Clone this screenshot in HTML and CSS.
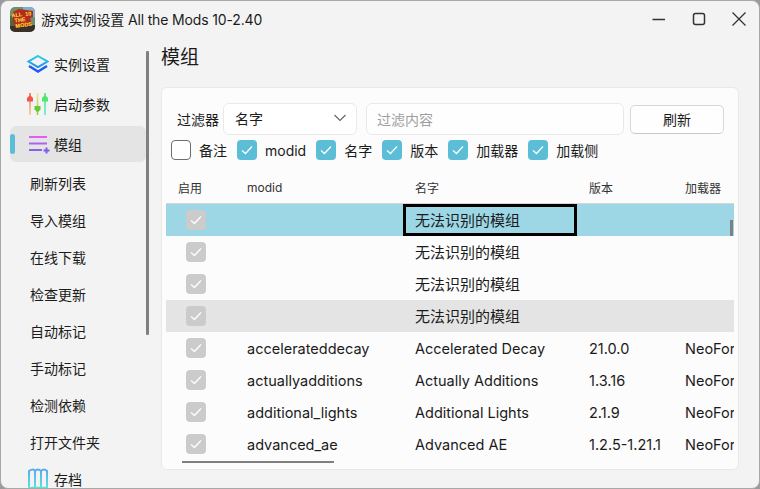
FILE: index.html
```html
<!DOCTYPE html>
<html lang="zh">
<head>
<meta charset="utf-8">
<title>游戏实例设置</title>
<link rel="stylesheet" href="styles.css">
</head>
<body>
<div class="window">
  <header class="titlebar">
    <svg class="app-icon" width="25" height="25" viewBox="0 0 25 25">
      <defs><clipPath id="rc"><rect width="25" height="25" rx="5"/></clipPath></defs>
      <g clip-path="url(#rc)">
        <rect width="25" height="25" fill="#6f8f6a"/>
        <rect x="13" width="12" height="10" fill="#7fb0c8"/>
        <rect y="18" width="25" height="7" fill="#3a3028"/>
        <rect x="0" y="9" width="5" height="10" fill="#4b6b3c"/>
        <path d="M3 5l6-3 14 2 0 6-3 1 2 7-16 3-3-6z" fill="#b5291e"/>
        <g transform="rotate(-8 12.500 12.500)">
          <text x="7.500" y="9" class="logo-text">ALL</text>
          <text x="19" y="9.500" class="logo-text">10</text>
          <text x="10" y="14.500" class="logo-text">THE</text>
          <text x="13" y="20" class="logo-text">MODS</text>
        </g>
      </g>
    </svg>
    <span class="title">游戏实例设置 All the Mods 10-2.40</span>
    <div class="controls">
      <svg width="14" height="14" viewBox="0 0 14 14"><path d="M0.500 7.500h12.500" class="ctl"/></svg>
      <svg width="14" height="14" viewBox="0 0 14 14"><rect x="1.500" y="1.500" width="11" height="11" rx="2" class="ctl"/></svg>
      <svg width="14" height="14" viewBox="0 0 14 14"><path d="M0.500 0.500l13 13M13.500 0.500l-13 13" class="ctl thin"/></svg>
    </div>
  </header>
  <div class="body">
    <nav class="sidebar">
      <div class="nav-list">
        <div class="nav-item big">
          <svg class="nav-icon" width="24" height="20" viewBox="0 0 24 20">
            <defs><linearGradient id="g1" x1="0" y1="0" x2="0" y2="1"><stop offset="0" stop-color="#1fd5e0"/><stop offset="1" stop-color="#1f8cf0"/></linearGradient></defs>
            <path d="M12 2l9.500 5.500-9.500 5.500-9.500-5.500z" fill="none" stroke="url(#g1)" stroke-width="2"/>
            <path d="M3 12l9 5.500 9-5.500" fill="none" stroke="#1a5cf5" stroke-width="2.400"/>
          </svg>
          <span>实例设置</span>
        </div>
        <div class="nav-item big">
          <svg class="nav-icon" width="24" height="24" viewBox="0 0 24 24">
            <defs>
              <linearGradient id="s1" x1="0" y1="0" x2="0" y2="1"><stop offset="0" stop-color="#f56a50"/><stop offset="1" stop-color="#f7c79a"/></linearGradient>
              <linearGradient id="s2" x1="0" y1="0" x2="0" y2="1"><stop offset="0" stop-color="#f2e38a"/><stop offset="1" stop-color="#8fd04a"/></linearGradient>
              <linearGradient id="s3" x1="0" y1="0" x2="0" y2="1"><stop offset="0" stop-color="#52e86a"/><stop offset="1" stop-color="#5ceadc"/></linearGradient>
            </defs>
            <rect x="3.200" y="1" width="1.600" height="22" fill="url(#s1)"/>
            <rect x="10.700" y="1" width="1.600" height="22" fill="url(#s2)"/>
            <rect x="18.200" y="1" width="1.600" height="22" fill="url(#s3)"/>
            <path d="M4 3l3 3v3.500h-6v-3.500z" fill="#f5544a"/>
            <path d="M8.500 14h6v3.500l-3 3-3-3z" fill="#68c832"/>
            <path d="M19 3l3 3v3.500h-6v-3.500z" fill="#4fe86a"/>
          </svg>
          <span>启动参数</span>
        </div>
        <div class="nav-item big active">
          <i class="marker"></i>
          <svg class="nav-icon" width="24" height="20" viewBox="0 0 24 20">
            <path d="M3 3h18" stroke="#e45cf5" stroke-width="2"/>
            <path d="M3 9.500h18" stroke="#b060f0" stroke-width="2"/>
            <path d="M3 16h13" stroke="#8a60ee" stroke-width="2"/>
            <path d="M17.500 16.500h6M20.500 13.500v6" stroke="#7a5cf0" stroke-width="2"/>
          </svg>
          <span>模组</span>
        </div>
        <div class="nav-item sub">刷新列表</div>
        <div class="nav-item sub">导入模组</div>
        <div class="nav-item sub">在线下载</div>
        <div class="nav-item sub">检查更新</div>
        <div class="nav-item sub">自动标记</div>
        <div class="nav-item sub">手动标记</div>
        <div class="nav-item sub">检测依赖</div>
        <div class="nav-item sub">打开文件夹</div>
        <div class="nav-item big last">
          <svg class="nav-icon" width="24" height="22" viewBox="0 0 24 22">
            <defs><linearGradient id="g2" x1="0" y1="0" x2="0" y2="1"><stop offset="0" stop-color="#5aa8f0"/><stop offset="1" stop-color="#5ae8d8"/></linearGradient></defs>
            <path d="M3 3c3-2 5-2 6 0v18c-1-2-3-2-6 0zM9 3c2-2 4-2 6 0v18c-2-2-4-2-6 0zM15 3c2-2 4-2 6 0v18c-2-2-4-2-6 0z" fill="none" stroke="url(#g2)" stroke-width="2"/>
          </svg>
          <span>存档</span>
        </div>
      </div>
      <i class="side-scroll"></i>
    </nav>
    <main class="content">
      <h1 class="heading">模组</h1>
      <section class="card">
        <div class="filter-row">
          <label class="filter-label">过滤器</label>
          <div class="select">
            <span>名字</span>
            <svg width="14" height="8" viewBox="0 0 14 8"><path d="M1.500 1l5.500 5.500 5.500-5.500" fill="none" stroke="#666" stroke-width="1.200"/></svg>
          </div>
          <div class="input">过滤内容</div>
          <button class="refresh">刷新</button>
        </div>
        <div class="checks">
          <span class="check"><i class="box off"></i>备注</span>
          <span class="check"><i class="box on"><svg width="20" height="20" viewBox="0 0 20 20"><path d="M5 10.500l3.500 3 6.500-7" class="tick"/></svg></i>modid</span>
          <span class="check"><i class="box on"><svg width="20" height="20" viewBox="0 0 20 20"><path d="M5 10.500l3.500 3 6.500-7" class="tick"/></svg></i>名字</span>
          <span class="check"><i class="box on"><svg width="20" height="20" viewBox="0 0 20 20"><path d="M5 10.500l3.500 3 6.500-7" class="tick"/></svg></i>版本</span>
          <span class="check"><i class="box on"><svg width="20" height="20" viewBox="0 0 20 20"><path d="M5 10.500l3.500 3 6.500-7" class="tick"/></svg></i>加载器</span>
          <span class="check"><i class="box on"><svg width="20" height="20" viewBox="0 0 20 20"><path d="M5 10.500l3.500 3 6.500-7" class="tick"/></svg></i>加载侧</span>
        </div>
        <div class="table">
          <div class="row head">
            <span class="c-en">启用</span><span class="c-id">modid</span><span class="c-name">名字</span><span class="c-ver">版本</span><span class="c-load">加载器</span>
          </div>
          <div class="row cjk selected">
            <span class="c-en"><i class="box dis"><svg width="20" height="20" viewBox="0 0 20 20"><path d="M5 10.500l3.500 3 6.500-7" class="tick"/></svg></i></span><span class="c-id"></span><span class="c-name focus">无法识别的模组</span><span class="c-ver"></span><span class="c-load"></span>
          </div>
          <div class="row cjk">
            <span class="c-en"><i class="box dis"><svg width="20" height="20" viewBox="0 0 20 20"><path d="M5 10.500l3.500 3 6.500-7" class="tick"/></svg></i></span><span class="c-id"></span><span class="c-name">无法识别的模组</span><span class="c-ver"></span><span class="c-load"></span>
          </div>
          <div class="row cjk">
            <span class="c-en"><i class="box dis"><svg width="20" height="20" viewBox="0 0 20 20"><path d="M5 10.500l3.500 3 6.500-7" class="tick"/></svg></i></span><span class="c-id"></span><span class="c-name">无法识别的模组</span><span class="c-ver"></span><span class="c-load"></span>
          </div>
          <div class="row cjk hover">
            <span class="c-en"><i class="box dis"><svg width="20" height="20" viewBox="0 0 20 20"><path d="M5 10.500l3.500 3 6.500-7" class="tick"/></svg></i></span><span class="c-id"></span><span class="c-name">无法识别的模组</span><span class="c-ver"></span><span class="c-load"></span>
          </div>
          <div class="row">
            <span class="c-en"><i class="box dis"><svg width="20" height="20" viewBox="0 0 20 20"><path d="M5 10.500l3.500 3 6.500-7" class="tick"/></svg></i></span><span class="c-id">accelerateddecay</span><span class="c-name">Accelerated Decay</span><span class="c-ver">21.0.0</span><span class="c-load">NeoForge</span>
          </div>
          <div class="row">
            <span class="c-en"><i class="box dis"><svg width="20" height="20" viewBox="0 0 20 20"><path d="M5 10.500l3.500 3 6.500-7" class="tick"/></svg></i></span><span class="c-id">actuallyadditions</span><span class="c-name">Actually Additions</span><span class="c-ver">1.3.16</span><span class="c-load">NeoForge</span>
          </div>
          <div class="row">
            <span class="c-en"><i class="box dis"><svg width="20" height="20" viewBox="0 0 20 20"><path d="M5 10.500l3.500 3 6.500-7" class="tick"/></svg></i></span><span class="c-id">additional_lights</span><span class="c-name">Additional Lights</span><span class="c-ver">2.1.9</span><span class="c-load">NeoForge</span>
          </div>
          <div class="row">
            <span class="c-en"><i class="box dis"><svg width="20" height="20" viewBox="0 0 20 20"><path d="M5 10.500l3.500 3 6.500-7" class="tick"/></svg></i></span><span class="c-id">advanced_ae</span><span class="c-name">Advanced AE</span><span class="c-ver">1.2.5-1.21.1</span><span class="c-load">NeoForge</span>
          </div>
          <i class="v-scroll"></i>
          <i class="h-scroll"></i>
        </div>
      </section>
    </main>
  </div>
</div>
</body>
</html>
```
FILE: styles.css
```css
* { box-sizing: border-box; }
html, body { margin: 0; height: 100%; background: #9a9a9a; overflow: hidden; }
body { font-family: Inter, "Noto Sans CJK SC", sans-serif; font-size: 14px; color: #1b1b1b; }
i { display: block; font-style: normal; }

.window {
  width: 760px; height: 489px; background: #f3f3f3;
  border: 1px solid #a8a8a8; border-radius: 8px;
  display: flex; flex-direction: column; overflow: hidden;
}

.titlebar { height: 36px; flex: none; display: flex; align-items: center; padding: 0 13px 0 9px; }
.app-icon { flex: none; margin-top: 1px; }
.logo-text { font: 800 5.500px "Liberation Sans", sans-serif; fill: #ffe23c; text-anchor: middle; }
.title { margin-left: 6px; font-size: 14px; line-height: 20px; margin-top: 1px; letter-spacing: -0.150px; }
.controls { margin-left: auto; display: flex; gap: 26px; }
.ctl { fill: none; stroke: #333; stroke-width: 1.500; }
.ctl.thin { stroke-width: 1.300; }

.body { flex: 1; display: flex; min-height: 0; }

.sidebar { width: 160px; flex: none; position: relative; padding: 7px 0 0 9px; }
.nav-list { width: 136px; }
.nav-item { display: flex; align-items: center; font-size: 14px; }
.nav-item.big { height: 40px; padding-left: 16px; gap: 4px; position: relative; border-radius: 6px; }
.nav-item.active { background: #e4e4e4; height: 36px; margin: 2px 0; }
.nav-item.sub { height: 37px; padding-left: 20px; }
.nav-item.last { height: 37px; }
.nav-icon { flex: none; }
.marker { position: absolute; left: 0; top: 8px; width: 5px; height: 20px; border-radius: 3px; background: #5bbdd6; }
.side-scroll { position: absolute; left: 145px; top: 14px; width: 3px; height: 284px; background: #808080; border-radius: 1px; }

.content { flex: 1; min-width: 0; padding-right: 20px; }
.heading { margin: 7px 0 0; font-size: 19px; font-weight: 400; line-height: 28px; height: 43px; }

.card {
  height: 383px; background: #fcfcfc; border: 1px solid #e8e8e8; border-radius: 6px;
  padding: 15px 0 0 4px;
  display: flex; flex-direction: column; overflow: hidden;
}

.filter-row { display: flex; align-items: center; padding: 0 15px 0 11px; height: 32px; }
.filter-label { font-size: 14px; width: 46px; flex: none; }
.select {
  width: 134px; height: 32px; flex: none; background: #fff; border: 1px solid #e9e9e9; border-radius: 6px;
  display: flex; align-items: center; justify-content: space-between; padding: 0 9px 2px 11px; font-size: 14px;
}
.input {
  width: 258px; height: 32px; flex: none; margin-left: 9px; background: #fefefe; border: 1px solid #e9e9e9; border-radius: 6px;
  display: flex; align-items: center; padding-left: 10px; color: #a0a0a0; font-size: 14px;
}
.refresh {
  width: 94px; height: 29px; margin-left: 6px; flex: none; background: #fefefe; border: 1px solid #d8d8d8; border-bottom-color: #c8c8c8; border-radius: 5px;
  font: inherit; font-size: 14px; color: #1b1b1b; padding: 0;
}

.checks { display: flex; margin-top: 4px; padding-left: 5px; height: 22px; align-items: center; font-size: 14px; }
.check { display: flex; align-items: center; gap: 8px; margin-right: 10px; }
.box { width: 20px; height: 20px; border-radius: 4px; flex: none; }
.box.off { border: 1px solid #6e6e6e; background: #fff; }
.box.on { background: #5bbdd6; }
.box.dis { background: #cbcbcb; }
.box svg { display: block; }
.tick { fill: none; stroke: #fff; stroke-width: 1.300; }

.table { position: relative; margin-top: 14px; width: 568px; flex: 1; overflow: hidden; }
.row { display: flex; height: 32px; align-items: center; font-size: 14.500px; }
.row.cjk { font-size: 15px; }
.row.cjk .c-name { padding-bottom: 2px; }
.row.head { height: 29px; font-size: 12px; color: #333; border-bottom: 1px solid #d6d6d6; padding-bottom: 4px; }
.row.selected { background: #9dd7e6; }
.row.hover { background: #e4e4e4; }
.row > span { flex: none; display: flex; align-items: center; white-space: nowrap; overflow: hidden; height: 100%; padding-left: 12px; }
.c-en { width: 69px; }
.row:not(.head) .c-en { padding-left: 20px; }
.c-id { width: 168px; }
.c-name { width: 174px; }
.c-ver { width: 96px; }
.c-load { width: 61px; }
.focus { border: 3px solid #000; padding-left: 9px !important; }
.v-scroll { position: absolute; right: 1px; top: 45px; width: 3px; height: 16px; background: #808080; }
.h-scroll { position: absolute; left: 16px; top: 286px; width: 152px; height: 2px; background: #808080; }
```
